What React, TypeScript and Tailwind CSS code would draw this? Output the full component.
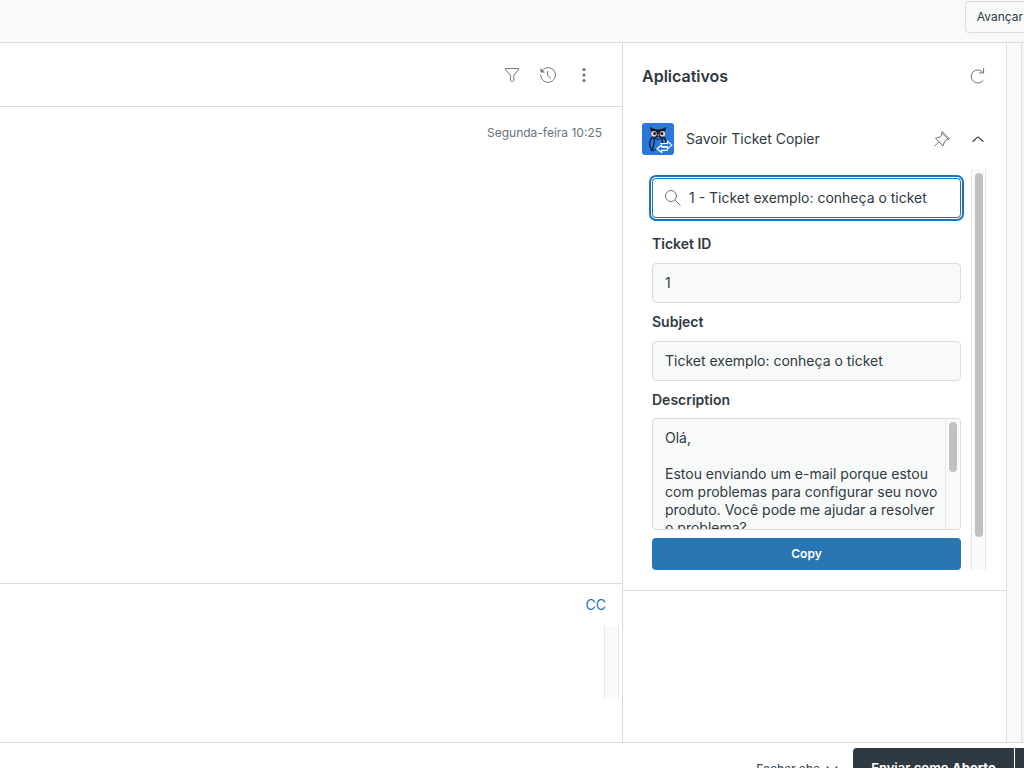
import type { ReactNode } from "react";

const description = `Olá,

Estou enviando um e-mail porque estou com problemas para configurar seu novo produto. Você pode me ajudar a resolver o problema?`;

function FilterIcon() {
	return (
		<svg viewBox="0 0 16 16" className="h-4 w-4" fill="none" stroke="currentColor" strokeLinejoin="round" aria-hidden="true">
			<path d="M1.5 1.5h13v1.2L9.8 8.3v4.9c0 .8-.8 1.4-1.8 1.4s-1.6-.6-1.6-1.4V8.3L1.5 2.7z" />
		</svg>
	);
}

function HistoryIcon() {
	return (
		<svg viewBox="0 0 16 16" className="h-4 w-4" fill="none" stroke="currentColor" strokeLinecap="round" strokeLinejoin="round" aria-hidden="true">
			<path d="M1.4 4.6A7.4 7.4 0 1 1 .6 8.200" />
			<path d="M7.5 4.5v4l2.7 2.300" />
			<path d="M.5 1v4.500H5z" fill="currentColor" stroke="none" />
		</svg>
	);
}

function DotsIcon() {
	return (
		<svg viewBox="0 0 16 16" className="h-4 w-4" fill="currentColor" aria-hidden="true">
			<circle cx="8" cy="2.5" r="1.6" />
			<circle cx="8" cy="8" r="1.6" />
			<circle cx="8" cy="13.5" r="1.6" />
		</svg>
	);
}

function ReloadIcon() {
	return (
		<svg viewBox="0 0 16 16" className="h-4 w-4" fill="none" stroke="currentColor" strokeLinecap="round" strokeLinejoin="round" aria-hidden="true">
			<path d="M13.1 12.500A6.600 6.600 0 1 1 13.100 4.500" />
			<path d="M13.600.6v4.300H9.500" />
		</svg>
	);
}

function PinIcon() {
	return (
		<svg viewBox="0 0 16 16" className="h-4 w-4" fill="none" stroke="currentColor" strokeLinecap="round" strokeLinejoin="round" aria-hidden="true">
			<path d="M8.5.8l7 7-1.400.5-6.200-6.200z" />
			<path d="M8 2.500L6.500 5.800l-5 1.400L9 15l1.800-4.800 3-2.200" />
			<path d="M4.900 10.800L.8 15" />
		</svg>
	);
}

function Chevron({ up, className }: { up?: boolean; className: string }) {
	return (
		<svg viewBox="0 0 12 12" className={className} fill="none" stroke="currentColor" strokeWidth="1.200" strokeLinecap="round" strokeLinejoin="round" aria-hidden="true">
			<path d={up ? "M1 8.300l4.300-3.900a1 1 0 0 1 1.400 0L11 8.300" : "M1 3.700l4.300 3.900a1 1 0 0 0 1.400 0L11 3.700"} />
		</svg>
	);
}

function SearchIcon() {
	return (
		<svg viewBox="0 0 16 16" className="h-4 w-4" fill="none" stroke="currentColor" strokeLinecap="round" aria-hidden="true">
			<circle cx="6" cy="6" r="5.500" />
			<path d="M10.200 10.200l5 5" />
		</svg>
	);
}

function OwlLogo() {
	return (
		<svg viewBox="0 0 32 32" className="h-8 w-8 shrink-0" fill="none" strokeLinecap="round" strokeLinejoin="round" aria-hidden="true">
			<rect width="32" height="32" rx="3" fill="#2b78dc" />
			{/* body and wings */}
			<path d="M10.500 14C7.800 17 7 21.500 8.600 25.500l1.200 2M21.500 14c1.900 2 2.700 4.300 2.700 6M12 15c.6 4-.2 8-2.200 12.500M20.500 15c-.7 2.300-.5 4 .2 5.500" stroke="#0b1626" strokeWidth="1.200" />
			<path d="M10 27.800l3.500-1.300M13 15.500l3.300 1 3.200-1" stroke="#0b1626" />
			{/* head */}
			<path d="M8 4c2.600 1.800 5.200 1.800 8.200 2.700C19 5.800 21.800 5.800 24.200 4c-.2 2-.5 3.200-1.300 4.300 1 2.300.8 4.700-1.400 5.900-2 1-4 .5-5.300-.8-1.400 1.300-3.500 1.800-5.400.8-2.200-1.200-2.500-3.600-1.400-5.900C8.400 7.200 8 5.900 8 4z" fill="#111827" />
			<circle cx="11.900" cy="10.800" r="2.900" fill="#e0d3d0" />
			<circle cx="20.500" cy="10.800" r="2.900" fill="#e0d3d0" />
			<circle cx="12.600" cy="10.600" r="1.500" fill="#3b1718" />
			<circle cx="19.800" cy="10.600" r="1.500" fill="#3b1718" />
			<path d="M15.300 11.500h1.800l-.9 2.300z" fill="#e8b4a0" />
			{/* exchange arrows */}
			<path d="M18.500 20.500h6.800v-2.400l4.700 4-4.700 3.800v-2.300h-6M25.500 27.300h-5.800v2.200L15 25.700l4.700-3.900v2.300h5" stroke="#fff" strokeWidth="1.200" />
		</svg>
	);
}

type IconButtonProps = { label: string; children: ReactNode };

function IconButton({ label, children }: IconButtonProps) {
	return (
		<button type="button" aria-label={label} className="flex h-9 w-9 items-center justify-center">
			{children}
		</button>
	);
}

type FieldProps = { id: string; label: string; value: string };

function Field({ id, label, value }: FieldProps) {
	return (
		<div>
			<label htmlFor={id} className="mb-[9px] block font-semibold leading-5">{label}</label>
			<input id={id} readOnly value={value} className="block h-10 w-full rounded border border-[#d8dcde] bg-[#f8f9f9] px-3 pb-[2px]" />
		</div>
	);
}

function ConversationPane() {
	return (
		<section className="flex min-w-0 flex-1 flex-col border-r border-[#d8dcde]">
			<div className="flex h-16 shrink-0 items-center justify-end border-b border-[#d8dcde] pr-5 text-[#68737d]">
				<IconButton label="Filtrar"><FilterIcon /></IconButton>
				<IconButton label="Histórico"><HistoryIcon /></IconButton>
				<IconButton label="Mais opções"><DotsIcon /></IconButton>
			</div>
			<div className="flex-1 px-5 py-4 text-right text-xs leading-5 text-[#68737d]">
				<time>Segunda-feira 10:25</time>
			</div>
			<div className="flex h-[159px] shrink-0 flex-col items-end border-t border-[#d8dcde]">
				<button type="button" className="mt-[11px] mr-4 text-sm leading-5 text-[#1f73b7]">CC</button>
				<div className="mt-[11px] mr-[3px] h-[73px] w-[15px] border-x border-[#e8e8e8] bg-[#fafafa]" />
			</div>
		</section>
	);
}

function TicketForm() {
	return (
		<form className="flex min-w-0 flex-1 flex-col px-[10px] pt-[9px]" onSubmit={(e) => e.preventDefault()}>
			<label className="flex h-10 items-center gap-2 rounded border border-[#1f73b7] px-3 shadow-[0_0_0_1px_#fff,0_0_0_3px_#1f73b7]">
				<span className="text-[#68737d]"><SearchIcon /></span>
				<input aria-label="Buscar ticket" defaultValue="1 - Ticket exemplo: conheça o ticket" className="w-full min-w-0 outline-none" />
			</label>
			<div className="mt-4 flex flex-col gap-[9px]">
				<Field id="ticket-id" label="Ticket ID" value="1" />
				<Field id="subject" label="Subject" value="Ticket exemplo: conheça o ticket" />
				<div>
					<label htmlFor="description" className="mb-2 block font-semibold leading-5">Description</label>
					<div className="flex h-28 overflow-hidden rounded border border-[#d8dcde] bg-[#f8f9f9]">
						<textarea id="description" readOnly value={description} className="h-full min-w-0 flex-1 resize-none overflow-hidden py-[10px] pr-1 pl-3 leading-[18px]" />
						<div className="w-[15px] border-l border-[#e8e8e8] bg-[#fafafa] px-[3px] pt-[3px]">
							<div className="h-[50px] w-2 rounded-full bg-[#c1c1c1]" />
						</div>
					</div>
				</div>
			</div>
			<button type="submit" className="mt-2 h-8 rounded bg-[#2a76b3] text-xs font-semibold text-white">Copy</button>
		</form>
	);
}

function AppsPane() {
	return (
		<aside className="w-[383px] shrink-0 text-[#2f3941]">
			<div className="border-b border-[#d8dcde] pb-5 pl-[19px]">
				<div className="flex h-16 items-center justify-between pt-[2px] pr-[10px]">
					<h2 className="text-base font-semibold">Aplicativos</h2>
					<span className="text-[#68737d]"><IconButton label="Recarregar"><ReloadIcon /></IconButton></span>
				</div>
				<div className="flex h-16 items-center pr-[10px]">
					<OwlLogo />
					<h3 className="ml-3 flex-1 text-sm">Savoir Ticket Copier</h3>
					<span className="text-[#68737d]"><IconButton label="Fixar"><PinIcon /></IconButton></span>
					<IconButton label="Recolher"><Chevron up className="h-3 w-3" /></IconButton>
				</div>
				<div className="-mt-[2px] flex pr-5 text-sm">
					<TicketForm />
					<div className="w-[15px] border-x border-[#e8e8e8] bg-[#fafafa] px-[3px] pt-1">
						<div className="h-[364px] w-2 rounded-full bg-[#c1c1c1]" />
					</div>
				</div>
			</div>
		</aside>
	);
}

export default function App() {
	return (
		<div className="flex h-screen flex-col overflow-hidden bg-white font-[Inter,sans-serif] text-[#2f3941]">
			<header className="flex h-[43px] shrink-0 items-start justify-end overflow-hidden border-b border-[#d8dcde] bg-[#f8f9f9]">
				<button type="button" className="mt-px h-8 rounded-l border border-r-0 border-[#d8dcde] pr-px pl-[11px] text-xs">Avançar</button>
			</header>
			<main className="flex min-h-0 flex-1">
				<ConversationPane />
				<AppsPane />
				<div className="w-4 shrink-0 border-x border-[#e0e0e0] bg-[#fafafa]" />
				<div className="w-[2px] shrink-0 bg-[#f3f4f4]" />
			</main>
			<footer className="flex h-[26px] shrink-0 items-start justify-end overflow-hidden border-t border-[#d8dcde]">
				<button type="button" className="mt-[5px] mr-[15px] flex h-[42px] items-center gap-[6px] text-xs font-medium text-[#49545c]">
					Fechar aba
					<Chevron className="h-3 w-3" />
				</button>
				<button type="button" className="mt-[5px] h-[42px] w-[161px] rounded-tl bg-[#2f3941] text-[13px] font-semibold whitespace-nowrap text-white">
					Enviar como <strong className="font-bold">Aberto</strong>
				</button>
				<button type="button" aria-label="Mais opções de envio" className="mt-[5px] ml-px h-[42px] w-[9px] bg-[#2f3941]" />
			</footer>
		</div>
	);
}
